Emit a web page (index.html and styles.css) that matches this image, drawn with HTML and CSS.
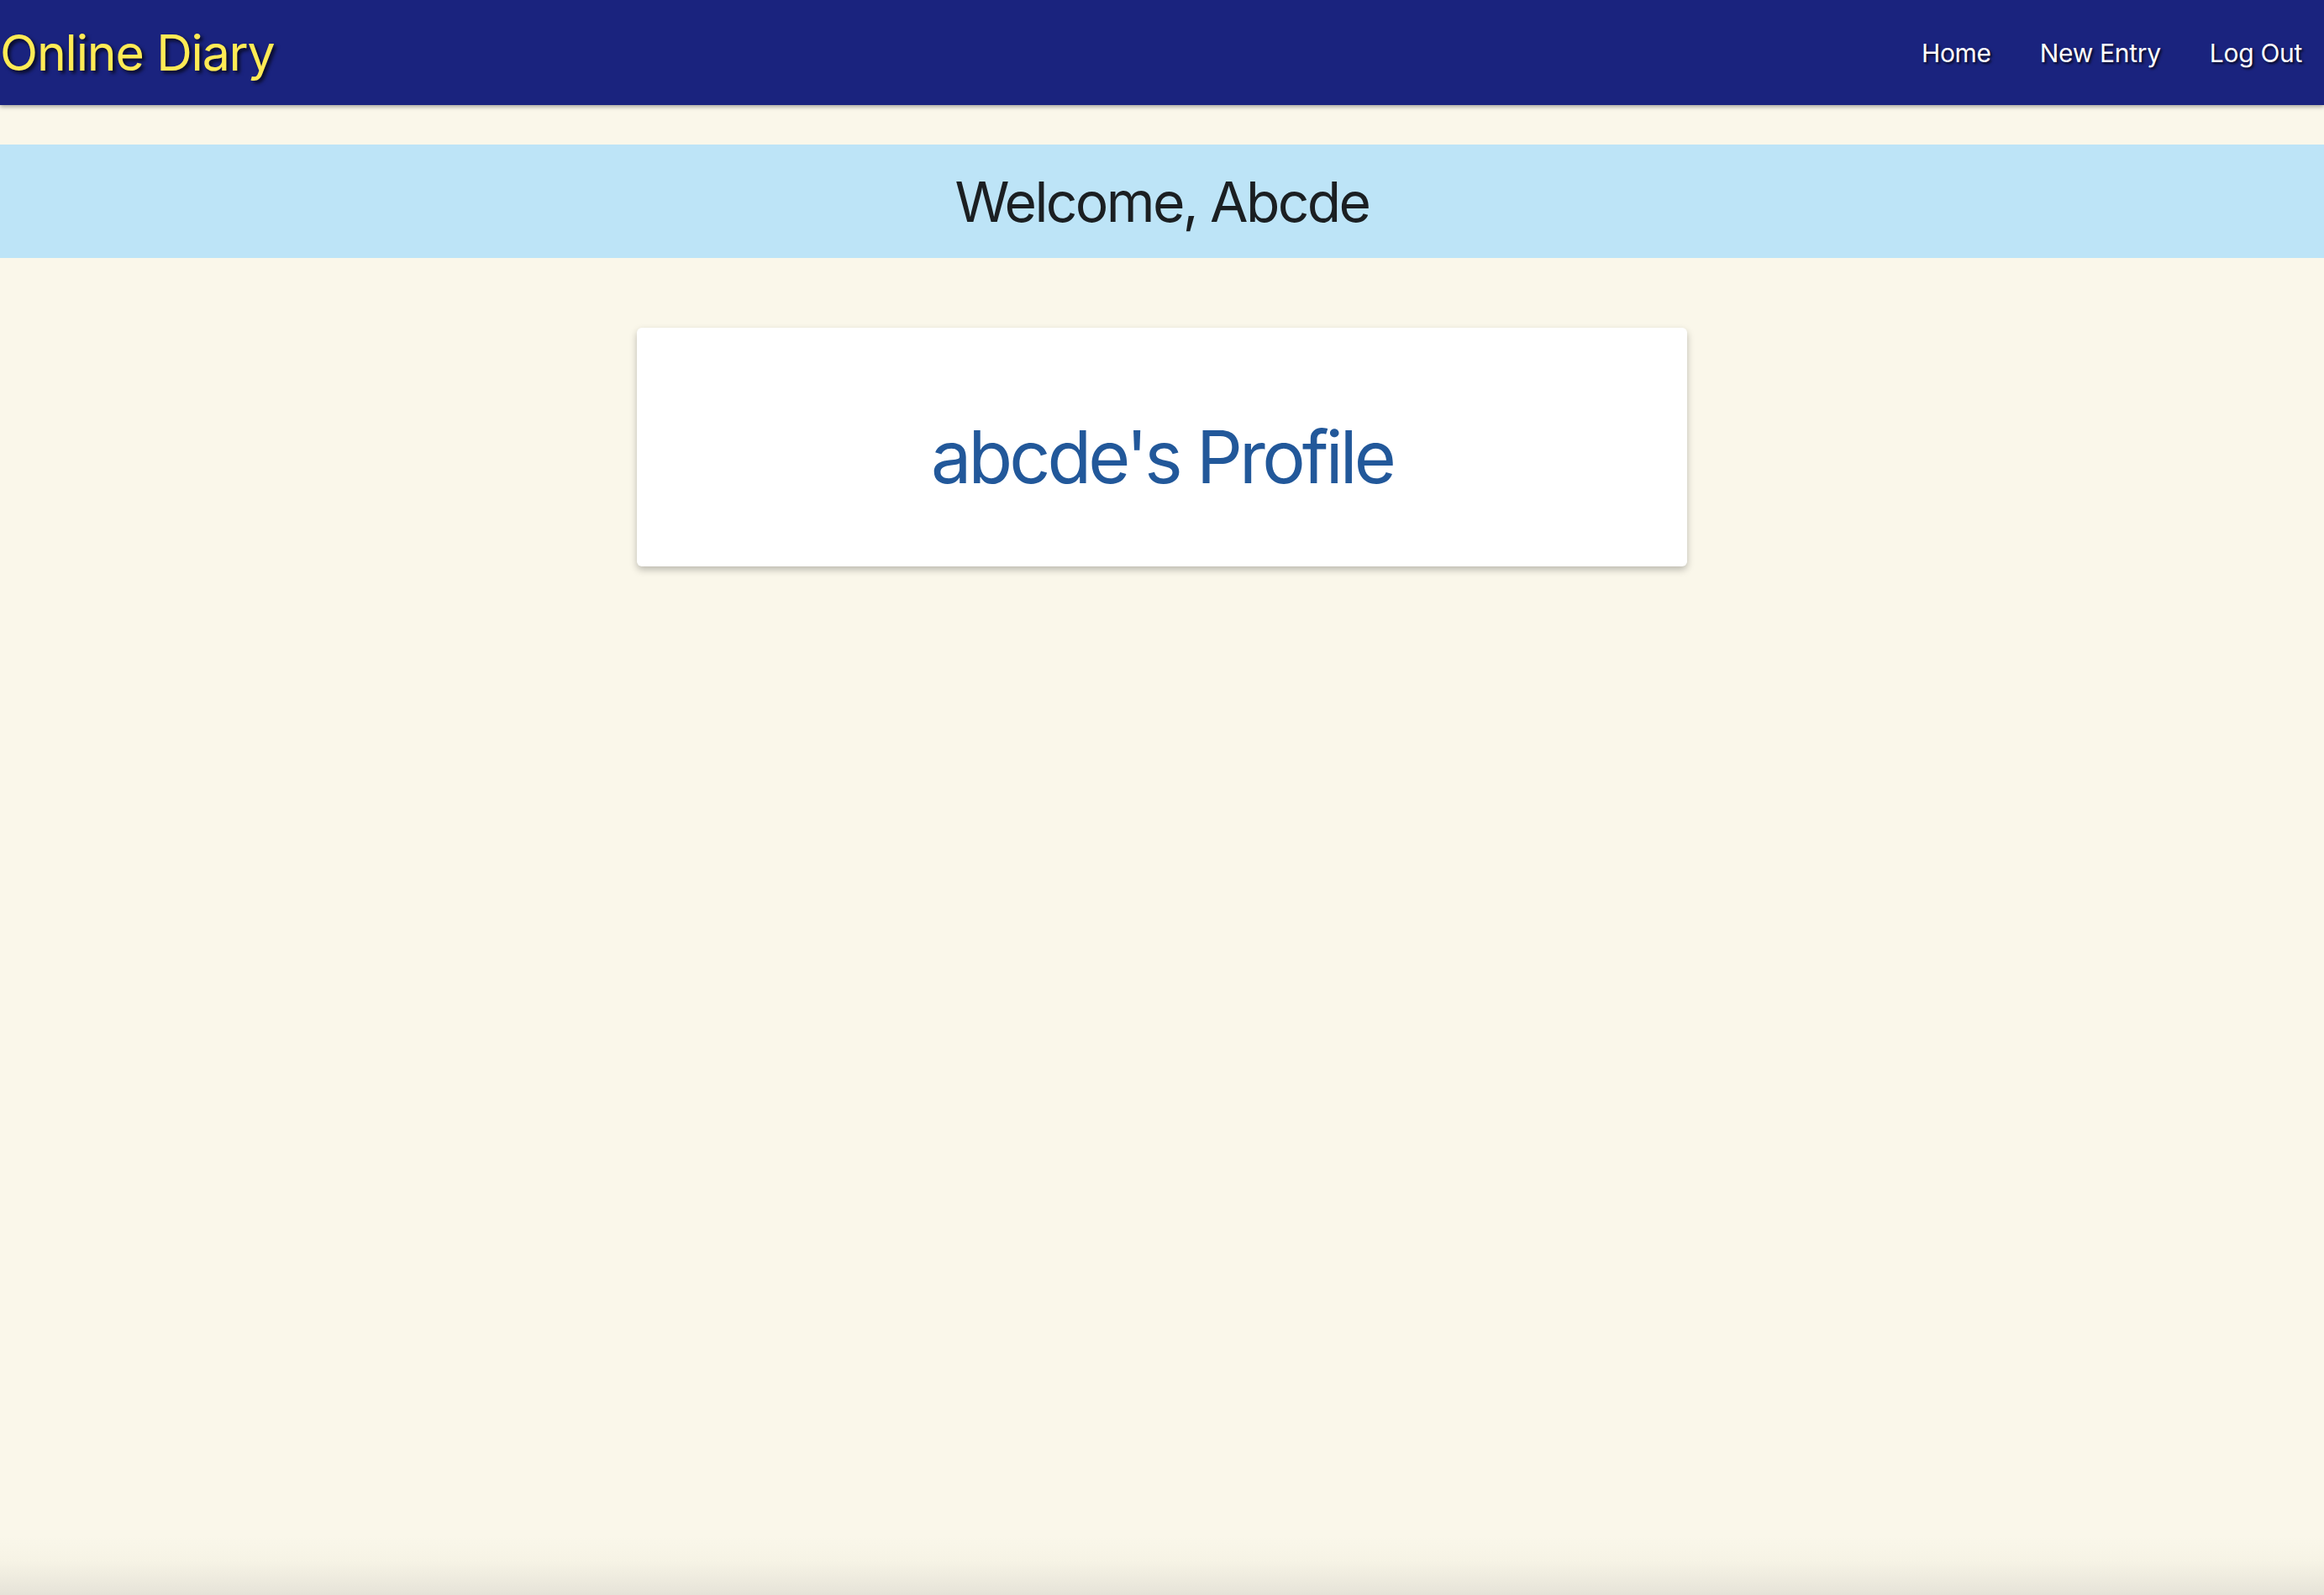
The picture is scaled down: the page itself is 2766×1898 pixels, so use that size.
FILE: index.html
```html
<!DOCTYPE html>
<html lang="en">
<head>
<meta charset="utf-8">
<title>Online Diary</title>
<link rel="stylesheet" href="styles.css">
</head>
<body>
<header class="navbar">
  <a class="brand" href="#">Online Diary</a>
  <nav class="nav-links">
    <a class="nav-link" href="#">Home</a>
    <a class="nav-link" href="#">New Entry</a>
    <a class="nav-link" href="#">Log Out</a>
  </nav>
</header>
<section class="welcome">
  <h2 class="welcome-text">Welcome, Abcde</h2>
</section>
<main class="content">
  <div class="profile-card">
    <h1 class="profile-title">abcde's Profile</h1>
  </div>
</main>
</body>
</html>
```
FILE: styles.css
```css
html {
  min-height: 100%;
  background: linear-gradient(to bottom, #faf7ea calc(100% - 70px), #f6f3e5 calc(100% - 40px), #e6e3d8 100%);
}
body {
  margin: 0;
  min-height: 100vh;
  font-family: "Inter", "Liberation Sans", sans-serif;
}
.navbar {
  height: 125px;
  background: #1a237e;
  display: flex;
  align-items: center;
  justify-content: space-between;
  box-shadow: 0 2px 5px rgba(0, 0, 0, 0.35);
}
.brand {
  color: #ffeb55;
  text-decoration: none;
  font-size: 59px;
  letter-spacing: -0.02em;
  line-height: 1;
  text-shadow: 3px 3px 4px rgba(0, 0, 0, 0.75);
}
.nav-links {
  display: flex;
  margin-right: -3px;
}
.nav-link {
  color: #ffffff;
  text-decoration: none;
  font-size: 30px;
  letter-spacing: -0.01em;
  padding: 0 29px;
  text-shadow: 2px 2px 3px rgba(0, 0, 0, 0.75);
}
.welcome {
  margin-top: 47px;
  height: 135px;
  background: #bde4f7;
  display: flex;
  align-items: center;
  justify-content: center;
}
.welcome-text {
  margin: 0;
  font-size: 66px;
  letter-spacing: -0.04em;
  font-weight: 400;
  color: #1b1f22;
  line-height: 1;
}
.content {
  display: flex;
  justify-content: center;
  padding-top: 83px;
}
.profile-card {
  width: 1250px;
  height: 284px;
  box-sizing: border-box;
  padding-top: 24px;
  background: #ffffff;
  border-radius: 6px;
  box-shadow: 0 4px 8px rgba(0, 0, 0, 0.25);
  display: flex;
  align-items: center;
  justify-content: center;
}
.profile-title {
  margin: 0;
  font-size: 86px;
  letter-spacing: -0.045em;
  font-weight: 400;
  color: #22589a;
  line-height: 1;
}
```
